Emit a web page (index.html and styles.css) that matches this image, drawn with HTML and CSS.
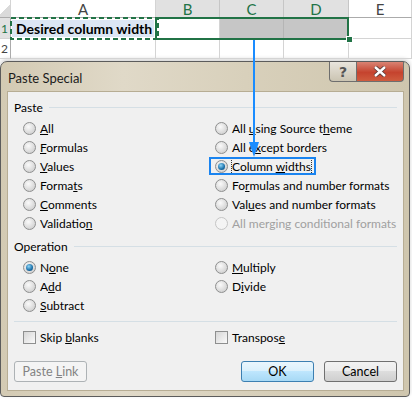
FILE: index.html
```html
<!DOCTYPE html>
<html lang="en">
<head>
    <meta charset="UTF-8">
    <title>Paste Special - column widths</title>
    <link rel="stylesheet" href="styles.css">
</head>
<body>
    <div class="sheet">
        <div class="corner"></div>
        <div class="colhead">A</div>
        <div class="colhead sel">B</div>
        <div class="colhead sel">C</div>
        <div class="colhead sel">D</div>
        <div class="colhead">E</div>

        <div class="rowhead sel"><span>1</span></div>
        <div class="cell copied">Desired column width</div>
        <div class="cell"></div>
        <div class="cell shade"></div>
        <div class="cell shade"></div>
        <div class="cell"></div>

        <div class="rowhead"><span>2</span></div>
        <div class="cell"></div>
        <div class="cell"></div>
        <div class="cell"></div>
        <div class="cell"></div>
        <div class="cell"></div>

        <!-- marching ants round the copied cell -->
        <svg class="ants" width="149" height="23" viewBox="0 0 149 23">
            <rect x="1" y="1" width="147" height="21" fill="none" stroke="#217346" stroke-width="2" stroke-dasharray="5 3"/>
        </svg>
        <div class="range"></div>
        <div class="handle"></div>
    </div>

    <div class="dialog">
        <div class="titlebar">
            <span class="title">Paste Special</span>
            <div class="caption">
                <span class="cap help">?</span>
                <span class="cap close">
                    <svg width="14" height="11" viewBox="0 0 14 11">
                        <path d="M2 1 L12 10 M12 1 L2 10" stroke="#5a3a36" stroke-width="4.2"/>
                        <path d="M2 1 L12 10 M12 1 L2 10" stroke="#fff" stroke-width="2.4"/>
                    </svg>
                </span>
            </div>
        </div>

        <div class="panel">
            <div class="legend"><span>Paste</span></div>
            <div class="options">
                <label class="opt"><i class="radio"></i><span><u>A</u>ll</span></label>
                <label class="opt"><i class="radio"></i><span>All <u>u</u>sing Source t<u>h</u>eme</span></label>
                <label class="opt"><i class="radio"></i><span><u>F</u>ormulas</span></label>
                <label class="opt"><i class="radio"></i><span>All e<u>x</u>cept borders</span></label>
                <label class="opt"><i class="radio"></i><span><u>V</u>alues</span></label>
                <label class="opt marked"><i class="radio on"></i><span class="focus">Column <u>w</u>idths</span></label>
                <label class="opt"><i class="radio"></i><span>Forma<u>t</u>s</span></label>
                <label class="opt"><i class="radio"></i><span>Fo<u>r</u>mulas and number formats</span></label>
                <label class="opt"><i class="radio"></i><span><u>C</u>omments</span></label>
                <label class="opt"><i class="radio"></i><span>Val<u>u</u>es and number formats</span></label>
                <label class="opt"><i class="radio"></i><span>Validatio<u>n</u></span></label>
                <label class="opt off"><i class="radio"></i><span>All merging conditional formats</span></label>
            </div>

            <div class="legend op"><span>Operation</span></div>
            <div class="options">
                <label class="opt"><i class="radio on"></i><span>N<u>o</u>ne</span></label>
                <label class="opt"><i class="radio"></i><span><u>M</u>ultiply</span></label>
                <label class="opt"><i class="radio"></i><span>A<u>d</u>d</span></label>
                <label class="opt"><i class="radio"></i><span>D<u>i</u>vide</span></label>
                <label class="opt"><i class="radio"></i><span><u>S</u>ubtract</span></label>
            </div>

            <div class="options checks">
                <label class="opt"><i class="check"></i><span>Skip <u>b</u>lanks</span></label>
                <label class="opt"><i class="check"></i><span>Transpos<u>e</u></span></label>
            </div>

            <div class="buttons">
                <button class="btn" disabled>Paste <u>L</u>ink</button>
                <span class="spacer"></span>
                <button class="btn default">OK</button>
                <button class="btn">Cancel</button>
            </div>
        </div>
    </div>

    <!-- annotation arrow from the copied range into the dialog -->
    <svg class="arrow" width="14" height="120" viewBox="0 0 14 120">
        <line x1="7" y1="0" x2="7" y2="104" stroke="#1a8cff" stroke-width="2"/>
        <path d="M2 102 L12 102 L7 117 Z" fill="#1a8cff"/>
    </svg>
</body>
</html>
```

FILE: styles.css
```css
body {
    margin: 0;
    width: 412px;
    height: 399px;
    overflow: hidden;
    background: #fff;
    position: relative;
    font-family: Lato, "Noto Sans", sans-serif;
}

/* spreadsheet strip */
.sheet {
    position: relative;
    display: grid;
    grid-template-columns: 11px 145px 64px 64px 65px 63px;
    grid-template-rows: 18px 21px 20px;
    height: 61px;
    font-family: Lato, sans-serif;
}

.corner {
    border-right: 1px solid #d4d4d4;
    border-bottom: 1px solid #ababab;
    background: linear-gradient(135deg, #fff 55%, #dadada 55%);
}

.colhead {
    display: flex;
    align-items: center;
    justify-content: center;
    border-right: 1px solid #d4d4d4;
    border-bottom: 1px solid #ababab;
    color: #444;
    font-size: 15px;
}

.colhead.sel {
    background: #e1e1e1;
    color: #217346;
    border-right-color: #c6c6c6;
}

.rowhead {
    border-right: 1px solid #ababab;
    border-bottom: 1px solid #d4d4d4;
    color: #444;
    font-size: 12px;
    display: flex;
    align-items: center;
    justify-content: flex-end;
    padding-right: 2px;
}

.rowhead.sel {
    background: #e1e1e1;
    color: #217346;
}

.cell {
    border-right: 1px solid #d4d4d4;
    border-bottom: 1px solid #d4d4d4;
}

.cell.copied {
    display: flex;
    align-items: center;
    padding-left: 4px;
    margin: 2px 2px 2px 1px;
    background: #dce6f4;
    border: none;
    font-weight: bold;
    font-size: 14px;
    color: #000;
}

.cell.shade {
    background: #c6c6c6;
    border-right-color: #b5b5b5;
}

.ants {
    position: absolute;
    left: 10px;
    top: 17px;
}

.range {
    position: absolute;
    left: 155px;
    top: 17px;
    width: 190px;
    height: 19px;
    border: 2px solid #217346;
}

.handle {
    position: absolute;
    left: 346px;
    top: 36px;
    width: 5px;
    height: 5px;
    background: #217346;
    border: 1px solid #fff;
}

/* dialog window */
.dialog {
    width: 410px;
    height: 336px;
    border: 1px solid #5c5c5c;
    border-radius: 7px 7px 4px 4px;
    background: linear-gradient(90deg, #d3cab3, #e0d9c8 30%, #d8d0bb 60%, #cfc6ae);
    box-shadow: 0 -2px 4px rgba(0, 0, 0, 0.18);
    padding: 0 5px 5px 6px;
    box-sizing: border-box;
}

.titlebar {
    height: 29px;
    display: flex;
    align-items: flex-start;
    justify-content: space-between;
}

.title {
    margin-top: 8px;
    margin-left: 1px;
    font-size: 13px;
    color: #1b1b1b;
}

.caption {
    display: flex;
}

.cap {
    height: 19px;
    display: flex;
    align-items: center;
    justify-content: center;
    border: 1px solid #6e6e6e;
    border-top: none;
}

.help {
    width: 26px;
    border-radius: 0 0 0 4px;
    border-right: none;
    background: linear-gradient(#e8e4dc, #cbc4b2);
    color: #555;
    font-weight: bold;
    font-size: 14px;
    font-family: "DejaVu Sans", sans-serif;
}

.close {
    width: 46px;
    border-radius: 0 0 4px 0;
    background: linear-gradient(#d98373, #c5432e 55%, #cf5c3e);
}

.panel {
    height: 300px;
    background: #f0f0f0;
    border: 1px solid #b7ad94;
    box-sizing: border-box;
    padding: 6px 6px 0 6px;
    font-size: 12px;
    color: #000;
}

.legend {
    display: flex;
    align-items: center;
    gap: 6px;
    height: 18px;
    margin-bottom: 3px;
}

.legend::after {
    content: "";
    flex: 1;
    border-top: 1px solid #d5dfe5;
}

.legend.op {
    margin-top: 4px;
}

.options {
    display: grid;
    grid-template-columns: 192px 1fr;
    grid-auto-rows: 19px;
    padding-left: 9px;
}

.opt {
    display: inline-flex;
    align-items: center;
    white-space: nowrap;
    justify-self: start;
    position: relative;
}

.opt.off {
    color: #a0a0a0;
}

.opt.marked::after {
    content: "";
    position: absolute;
    left: -6px;
    right: -5px;
    top: 0;
    bottom: 1px;
    border: 2px solid #1a84f0;
}

.focus {
    outline: 1px dotted #333;
}

.radio {
    width: 11px;
    height: 11px;
    margin-right: 4px;
    border-radius: 50%;
    border: 1px solid #8e8f8f;
    background: radial-gradient(circle at 40% 35%, #fafafa, #d0d0d0 80%);
    display: inline-block;
    position: relative;
}

.opt.off .radio {
    border-color: #c5c5c5;
    background: #f4f4f4;
}

.radio.on::after {
    content: "";
    position: absolute;
    left: 2px;
    top: 2px;
    width: 7px;
    height: 7px;
    border-radius: 50%;
    background: radial-gradient(circle at 40% 35%, #8fd6f8, #1a6fa8 60%, #0d3f66);
}

.check {
    width: 11px;
    height: 11px;
    margin-right: 4px;
    border: 1px solid #8e8f8f;
    background: linear-gradient(135deg, #d6d6d6, #fafafa);
    display: inline-block;
}

.checks {
    margin-top: 6px;
    border-top: 1px solid #d5dfe5;
    padding-top: 6px;
}

.buttons {
    display: flex;
    gap: 10px;
    margin-top: 14px;
}

.spacer {
    flex: 1;
}

.btn {
    width: 73px;
    height: 21px;
    border: 1px solid #707070;
    border-radius: 3px;
    background: linear-gradient(#f2f2f2, #ebebeb 50%, #dddddd 50%, #cfcfcf);
    font-family: Lato, "Noto Sans", sans-serif;
    font-size: 12.5px;
    color: #000;
    padding: 0;
}

.btn:disabled {
    background: #f4f4f4;
    border-color: #adb2b5;
    color: #838383;
}

.btn.default {
    border-color: #3c7fb1;
    background: linear-gradient(#eaf6fd, #d9f0fc 50%, #bee6fd 50%, #a7d9f5);
}

.arrow {
    position: absolute;
    left: 247px;
    top: 40px;
}
```
